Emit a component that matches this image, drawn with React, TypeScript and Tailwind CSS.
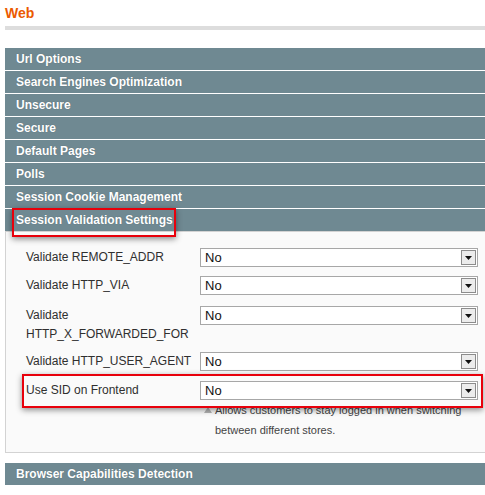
import React from 'react'

const sections = [
  'Url Options',
  'Search Engines Optimization',
  'Unsecure',
  'Secure',
  'Default Pages',
  'Polls',
  'Session Cookie Management',
  'Session Validation Settings',
]

const SectionHeader = ({ title }: { readonly title: string }): React.JSX.Element => (
  <div className="h-[22px] mb-px bg-[#6f8992] pl-[11px] flex items-center text-white font-bold text-[12px] [text-shadow:0_0_1px_rgba(0,0,0,0.25)]">
    {title}
  </div>
)

const Select = (): React.JSX.Element => (
  <div className="w-[278px] h-[19px] shrink-0 bg-white border border-[#a7a7a7] flex items-center justify-between pl-[4px] pr-px">
    <span className="text-[13px] text-[#111]">No</span>
    <span className="w-[15px] h-[15px] bg-[#ececec] border border-[#8c8c8c] flex items-center justify-center">
      <svg width="7" height="4" viewBox="0 0 7 4">
        <path d="M0 0h7L3.5 4z" fill="#111" />
      </svg>
    </span>
  </div>
)

interface RowProps {
  readonly label: React.ReactNode
  readonly gap: string
}

const Row = ({ label, gap }: RowProps): React.JSX.Element => (
  <div className={`flex items-start ${gap}`}>
    <div className="w-[194px] shrink-0 pl-[20px] text-[12px] leading-[19px] text-[#2f2f2f]">{label}</div>
    <Select />
  </div>
)

export default function App(): React.JSX.Element {
  return (
    <div className="w-[485px] h-[495px] bg-white overflow-hidden relative font-['Liberation_Sans',Arial,sans-serif]">
      <div className="pl-[5px] pt-[3px]">
        <h2 className="text-[14px] font-bold text-[#eb5a00] leading-[20px]">Web</h2>
        <div className="mt-[3px] h-[4px] bg-[#dddddd]" />
      </div>

      <div className="ml-[5px] mt-[18px] w-[490px]">
        {sections.map((s) => (
          <SectionHeader key={s} title={s} />
        ))}

        <div className="-mt-px border border-[#d3d3d3] bg-[#fafafa] pt-[16px] pb-[12px]">
          <Row label="Validate REMOTE_ADDR" gap="mb-[9px]" />
          <Row label="Validate HTTP_VIA" gap="mb-[11px]" />
          <Row
            label={
              <>
                Validate
                <br />
                HTTP_X_FORWARDED_FOR
              </>
            }
            gap="mb-[8px]"
          />
          <Row label="Validate HTTP_USER_AGENT" gap="mb-[10px]" />
          <Row label="Use SID on Frontend" gap="mb-0" />
          <div className="pl-[197px] text-[11px] leading-[20px] text-[#444]">
            <div className="flex items-center">
              <svg width="8" height="6" viewBox="0 0 8 6" className="mr-[3px] ml-[1px]">
                <path d="M4 0L8 6H0z" fill="#b3b3b3" />
              </svg>
              <span>Allows customers to stay logged in when switching</span>
            </div>
            <div className="pl-[12px]">between different stores.</div>
          </div>
        </div>

        <div className="mt-[10px]">
          <SectionHeader title="Browser Capabilities Detection" />
        </div>
      </div>

      <div className="absolute left-[12px] top-[208px] w-[164px] h-[29px] border-2 border-[#e8000b] shadow-[0_2px_6px_rgba(0,0,0,0.45)] pointer-events-none" />
      <div className="absolute left-[22px] top-[374px] w-[461px] h-[34px] border-2 border-[#e8000b] shadow-[0_2px_6px_rgba(0,0,0,0.45)] pointer-events-none" />
    </div>
  )
}
